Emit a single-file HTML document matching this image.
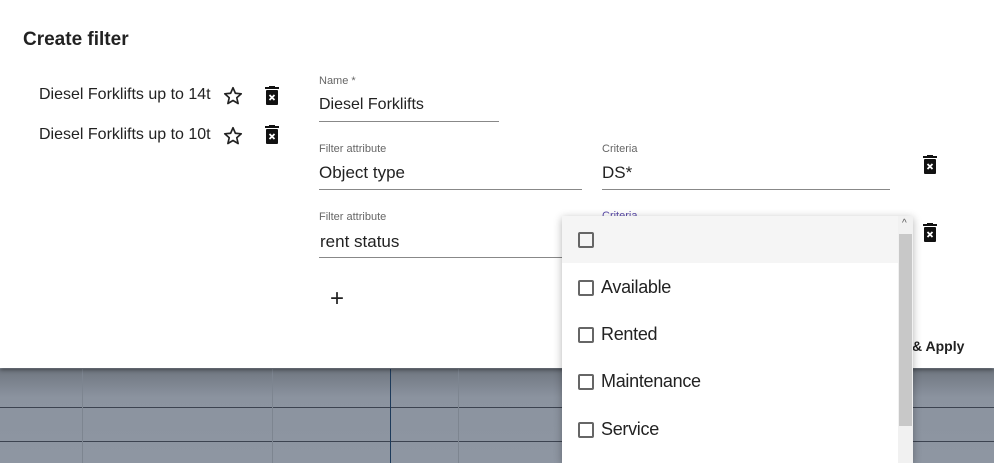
<!DOCTYPE html>
<html><head><style>
body{margin:0;width:994px;height:463px;overflow:hidden;position:relative;font-family:"Liberation Sans",sans-serif;background:#8a929e}
.bg{position:absolute;left:0;top:369px;width:994px;height:94px;background:linear-gradient(#6f7680,#8b939f 30%,#8e96a2)}
.h{position:absolute;left:0;width:994px;height:1px;background:#3c4350}
.v{position:absolute;top:369px;width:1px;height:94px;background:#7d8590}
.dlg{position:absolute;left:0;top:0;width:994px;height:368px;background:#fff;box-shadow:0 2px 4px rgba(0,0,0,.4)}
.t{position:absolute;white-space:nowrap;color:#222}
.lab{font-size:11px;color:#666}
.inp{font-size:17px;color:#222}
.line{position:absolute;height:1px;background:#888}
.dd{position:absolute;left:562px;top:216px;width:351px;height:247px;background:#fff;box-shadow:0 2px 8px rgba(0,0,0,.3)}
.opt{position:absolute;left:0;width:336px;height:47px;font-size:18px;color:#222}
.cb{position:absolute;left:16px;top:16px;width:12px;height:12px;border:2px solid #666;border-radius:2px}
.opt span{position:absolute;left:39px;top:13px;letter-spacing:-0.3px}
</style></head><body>
<div class="bg"></div>
<div class="h" style="top:407px"></div><div class="h" style="top:441px"></div>
<div class="v" style="left:82px"></div><div class="v" style="left:272px"></div><div class="v" style="left:458px"></div>
<div class="v" style="left:390px;background:#1d3a5a"></div>
<div class="dlg">
<div class="t" style="left:23px;top:29px;font-size:19px;font-weight:bold">Create filter</div>
<div class="t" style="left:39px;top:86px;font-size:16px">Diesel Forklifts up to 14t</div>
<div class="t" style="left:39px;top:126px;font-size:16px">Diesel Forklifts up to 10t</div>
<svg style="position:absolute;left:222px;top:85px" width="22" height="22" viewBox="0 0 24 24"><path d="M12 3l2.6 6 6.4.6-4.9 4.3 1.5 6.3L12 16.9 6.4 20.2l1.5-6.3L3 9.6l6.4-.6z" fill="none" stroke="#222" stroke-width="1.8" stroke-linejoin="round"/></svg>
<svg style="position:absolute;left:222px;top:125px" width="22" height="22" viewBox="0 0 24 24"><path d="M12 3l2.6 6 6.4.6-4.9 4.3 1.5 6.3L12 16.9 6.4 20.2l1.5-6.3L3 9.6l6.4-.6z" fill="none" stroke="#222" stroke-width="1.8" stroke-linejoin="round"/></svg>
<svg style="position:absolute;left:264px;top:86px" width="16" height="20" viewBox="0 0 16 20"><rect x="1" y="1" width="14" height="2" fill="#111"/><rect x="5" y="0" width="6" height="2" fill="#111"/><rect x="2" y="4" width="12" height="15" rx="1" fill="#111"/><path d="M5.5 9l5 5M10.5 9l-5 5" stroke="#fff" stroke-width="1.8"/></svg>
<svg style="position:absolute;left:264px;top:125px" width="16" height="20" viewBox="0 0 16 20"><rect x="1" y="1" width="14" height="2" fill="#111"/><rect x="5" y="0" width="6" height="2" fill="#111"/><rect x="2" y="4" width="12" height="15" rx="1" fill="#111"/><path d="M5.5 9l5 5M10.5 9l-5 5" stroke="#fff" stroke-width="1.8"/></svg>
<svg style="position:absolute;left:922px;top:155px" width="16" height="20" viewBox="0 0 16 20"><rect x="1" y="1" width="14" height="2" fill="#111"/><rect x="5" y="0" width="6" height="2" fill="#111"/><rect x="2" y="4" width="12" height="15" rx="1" fill="#111"/><path d="M5.5 9l5 5M10.5 9l-5 5" stroke="#fff" stroke-width="1.8"/></svg>
<svg style="position:absolute;left:922px;top:223px" width="16" height="20" viewBox="0 0 16 20"><rect x="1" y="1" width="14" height="2" fill="#111"/><rect x="5" y="0" width="6" height="2" fill="#111"/><rect x="2" y="4" width="12" height="15" rx="1" fill="#111"/><path d="M5.5 9l5 5M10.5 9l-5 5" stroke="#fff" stroke-width="1.8"/></svg>
<div class="t lab" style="left:319px;top:75px">Name *</div>
<div class="t" style="left:319px;top:96px;font-size:16px">Diesel Forklifts</div>
<div class="line" style="left:319px;top:121px;width:180px"></div>
<div class="t lab" style="left:319px;top:143px">Filter attribute</div>
<div class="t inp" style="left:319px;top:163px">Object type</div>
<div class="line" style="left:319px;top:189px;width:263px"></div>
<div class="t lab" style="left:602px;top:143px">Criteria</div>
<div class="t inp" style="left:602px;top:163px">DS*</div>
<div class="line" style="left:602px;top:189px;width:288px"></div>
<div class="t lab" style="left:319px;top:211px">Filter attribute</div>
<div class="t inp" style="left:320px;top:232px">rent status</div>
<div class="line" style="left:319px;top:257px;width:245px"></div>
<div class="t lab" style="left:602px;top:210px;color:#5a4aa8">Criteria</div>
<div class="t" style="left:330px;top:285px;font-size:24px;font-weight:300">+</div>
<div class="t" style="left:912px;top:338px;font-size:14px;font-weight:bold">&amp; Apply</div>
</div>
<div class="dd">
<div class="opt" style="top:0;background:#f5f5f5"><div class="cb"></div></div>
<div class="opt" style="top:48px"><div class="cb"></div><span>Available</span></div>
<div class="opt" style="top:95px"><div class="cb"></div><span>Rented</span></div>
<div class="opt" style="top:142px"><div class="cb"></div><span>Maintenance</span></div>
<div class="opt" style="top:190px"><div class="cb"></div><span>Service</span></div>
<div style="position:absolute;left:336px;top:0;width:15px;height:247px;background:#f1f1f1"></div>
<div style="position:absolute;left:337px;top:18px;width:13px;height:192px;background:#c8c8c8"></div>
<div style="position:absolute;left:340px;top:2px;font-size:10px;color:#555">^</div>
</div>
</body></html>
